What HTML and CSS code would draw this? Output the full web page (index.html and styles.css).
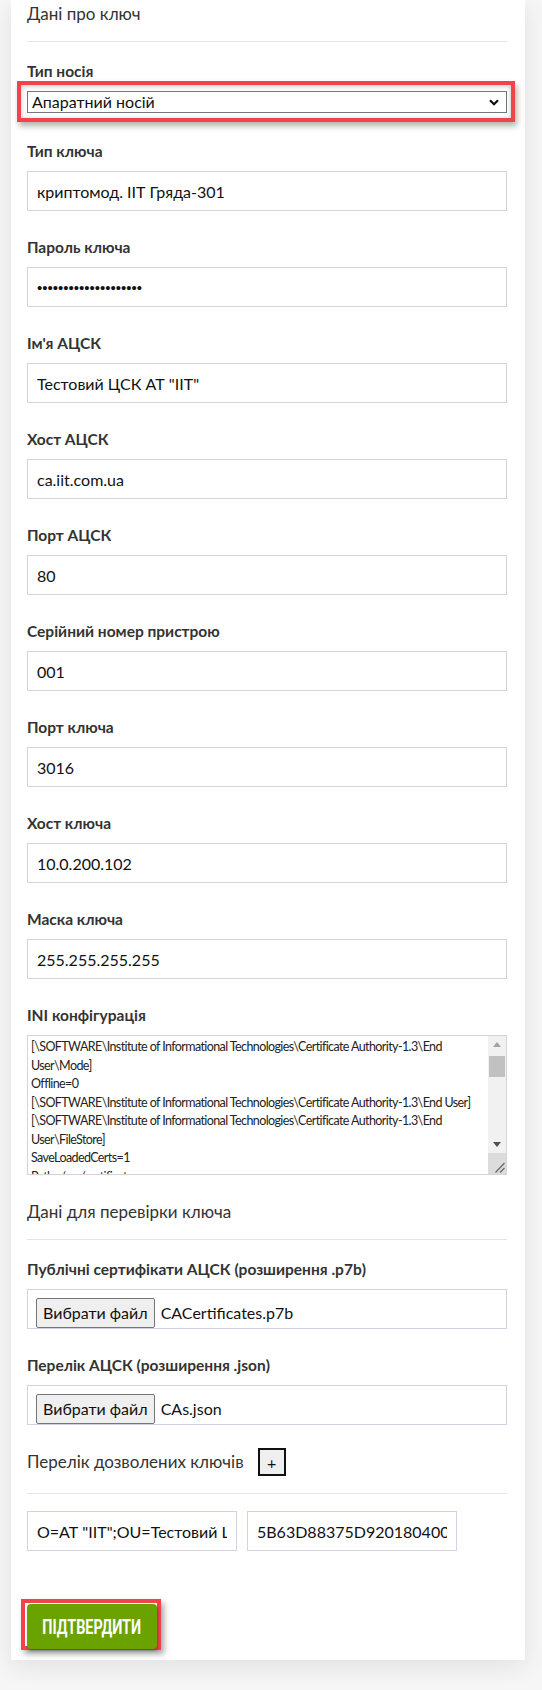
FILE: index.html
```html
<!DOCTYPE html>
<html lang="uk">
<head>
<meta charset="utf-8">
<title>Дані про ключ</title>
<link rel="stylesheet" href="styles.css">
</head>
<body>
<div class="card">
  <h4 class="section-title">Дані про ключ</h4>
  <hr class="divider">

  <div class="group group-select">
    <label class="label">Тип носія</label>
    <div class="highlight">
      <div class="select" role="combobox" aria-expanded="false">
        <span class="select-value">Апаратний носій</span>
        <svg class="select-arrow" width="10" height="7" viewBox="0 0 10 7" aria-hidden="true">
          <polyline points="1,1.2 5,5.2 9,1.2" fill="none" stroke="#111" stroke-width="2.2"/>
        </svg>
      </div>
    </div>
  </div>

  <div class="group">
    <label class="label">Тип ключа</label>
    <input class="input" type="text" value="криптомод. ІІТ Гряда-301">
  </div>
  <div class="group">
    <label class="label">Пароль ключа</label>
    <input class="input input-password" type="password" value="12345678901234567890">
  </div>
  <div class="group">
    <label class="label">Ім'я АЦСК</label>
    <input class="input" type="text" value="Тестовий ЦСК АТ &quot;ІІТ&quot;">
  </div>
  <div class="group">
    <label class="label">Хост АЦСК</label>
    <input class="input" type="text" value="ca.iit.com.ua">
  </div>
  <div class="group">
    <label class="label">Порт АЦСК</label>
    <input class="input" type="text" value="80">
  </div>
  <div class="group">
    <label class="label">Серійний номер пристрою</label>
    <input class="input" type="text" value="001">
  </div>
  <div class="group">
    <label class="label">Порт ключа</label>
    <input class="input" type="text" value="3016">
  </div>
  <div class="group">
    <label class="label">Хост ключа</label>
    <input class="input" type="text" value="10.0.200.102">
  </div>
  <div class="group">
    <label class="label">Маска ключа</label>
    <input class="input" type="text" value="255.255.255.255">
  </div>
  <div class="group group-ini">
    <label class="label">INI конфігурація</label>
    <div class="ta-box">
<textarea class="textarea">[\SOFTWARE\Institute of Informational Technologies\Certificate Authority-1.3\End User\Mode]
Offline=0
[\SOFTWARE\Institute of Informational Technologies\Certificate Authority-1.3\End User]
[\SOFTWARE\Institute of Informational Technologies\Certificate Authority-1.3\End User\FileStore]
SaveLoadedCerts=1
Path=/var/certificates
CheckCRLs=0
AutoDownloadCRLs=0
AutoRefresh=1
OwnCRLsOnly=0
FullAndDeltaCRLs=0
UseLocalStore=0
ExpireTime=3600
[\SOFTWARE\Institute of Informational Technologies\Certificate Authority-1.3\End User\Proxy]
Use=0
Anonymous=1
Address=
Port=3128
User=
Password=
SavePassword=1
[\SOFTWARE\Institute of Informational Technologies\Certificate Authority-1.3\End User\TSP]
GetStamps=0
Address=ca.iit.com.ua
Port=80
[\SOFTWARE\Institute of Informational Technologies\Certificate Authority-1.3\End User\OCSP]
Use=1
BeforeStore=1
Address=ca.iit.com.ua
Port=80</textarea>
      <div class="vscroll" aria-hidden="true">
        <span class="vs-btn vs-up"></span>
        <span class="vs-track"><span class="vs-thumb"></span></span>
        <span class="vs-btn vs-down"></span>
        <span class="vs-resizer">
          <svg width="18" height="21" viewBox="0 0 18 21">
            <line x1="16.5" y1="10" x2="7.5" y2="19.5" stroke="#666" stroke-width="1.2"/>
            <line x1="16.5" y1="15" x2="12" y2="19.5" stroke="#666" stroke-width="1.2"/>
          </svg>
        </span>
      </div>
    </div>
  </div>

  <h4 class="section-title">Дані для перевірки ключа</h4>
  <hr class="divider">

  <div class="group">
    <label class="label">Публічні сертифікати АЦСК (розширення .p7b)</label>
    <div class="file">
      <span class="file-btn">Вибрати файл</span>
      <span class="file-name">CACertificates.p7b</span>
    </div>
  </div>
  <div class="group group-last-file">
    <label class="label">Перелік АЦСК (розширення .json)</label>
    <div class="file">
      <span class="file-btn">Вибрати файл</span>
      <span class="file-name">CAs.json</span>
    </div>
  </div>

  <div class="row-head">
    <h4 class="section-title">Перелік дозволених ключів</h4>
    <button class="plus" type="button">+</button>
  </div>
  <hr class="divider divider-keys">

  <div class="keys">
    <input class="input key-input" type="text" value="O=АТ &quot;ІІТ&quot;;OU=Тестовий ЦСК;CN=Тестовий ЦСК АТ &quot;ІІТ&quot;">
    <input class="input key-input" type="text" value="5B63D88375D92018040000000100000001000000">
  </div>

  <div class="submit-wrap">
    <button class="submit" type="button"><span class="submit-text">ПІДТВЕРДИТИ</span></button>
  </div>
</div>
</body>
</html>
```

FILE: styles.css
```css
html, body {
  margin: 0;
  padding: 0;
}

body {
  background: #f6f6f6;
  font-family: Lato, "Noto Sans", sans-serif;
  color: #333;
}

.card {
  box-sizing: border-box;
  width: 514px;
  margin: 0 0 24px 11px;
  padding: 4px 18px 10px 16px;
  background: #fff;
  box-shadow: 0 6px 24px rgba(0, 0, 0, 0.09);
}

.section-title {
  margin: 0;
  font-size: 17px;
  line-height: 20px;
  font-weight: 400;
  color: #333;
}

.divider {
  height: 0;
  margin: 17px 0 19px;
  border: 0;
  border-top: 1px solid #e4e4e8;
}

.divider-keys {
  margin: 17px 0 17px;
}

.label {
  display: block;
  margin-bottom: 10px;
  font-size: 15.5px;
  line-height: 20px;
  font-weight: 700;
  color: #333;
}

.group {
  margin-bottom: 26px;
}

.group-select {
  margin-bottom: 19px;
}

.group-select .label {
  margin-bottom: 0;
}

.group-ini {
  margin-bottom: 27px;
}

.group-last-file {
  margin-bottom: 23px;
}

.highlight {
  margin: 0 -8px 0 -10px;
  padding: 6px 4px 5px 6px;
  border: 4px solid #f1434a;
  background: #fff;
  box-shadow: 2px 4px 6px rgba(0, 0, 0, 0.3), inset 0 1px 5px rgba(0, 0, 0, 0.25);
}

.select {
  box-sizing: border-box;
  height: 22px;
  padding: 0 7px 0 4px;
  display: flex;
  align-items: center;
  justify-content: space-between;
  border: 1px solid #767676;
  background: #fff;
  font-size: 16px;
  line-height: 20px;
  color: #111;
}

.select-arrow {
  display: block;
}

.input {
  display: block;
  box-sizing: border-box;
  width: 100%;
  height: 40px;
  margin: 0;
  padding: 0 9px;
  border: 1px solid #d2d2e0;
  border-radius: 0;
  background: #fff;
  font: 400 16px Lato, "Noto Sans", sans-serif;
  color: #111;
  outline: none;
}

.input-password {
  font: 400 15px "Liberation Sans", Arial, sans-serif;
}

.ta-box {
  box-sizing: border-box;
  height: 140px;
  display: flex;
  border: 1px solid #d2d2e0;
  background: #fff;
}

.textarea {
  flex: 1;
  min-width: 0;
  margin: 0;
  padding: 2px 3px;
  border: 0;
  resize: none;
  overflow: hidden;
  outline: none;
  font-family: Lato, "Noto Sans", sans-serif;
  font-size: 12.5px;
  letter-spacing: -0.6px;
  line-height: 18.5px;
  color: #222;
}

.vscroll {
  width: 18px;
  display: flex;
  flex-direction: column;
  background: #f1f1f1;
}

.vs-btn {
  height: 17px;
  display: flex;
  align-items: center;
  justify-content: center;
}

.vs-up::before {
  content: "";
  border-left: 4.5px solid transparent;
  border-right: 4.5px solid transparent;
  border-bottom: 5px solid #a3a3a3;
}

.vs-down::before {
  content: "";
  border-left: 4.5px solid transparent;
  border-right: 4.5px solid transparent;
  border-top: 5px solid #505050;
}

.vs-track {
  flex: 1;
  padding-top: 3px;
}

.vs-thumb {
  display: block;
  height: 21px;
  margin: 0 1px;
  background: #c1c1c1;
}

.vs-resizer {
  display: block;
  height: 21px;
  background: #dcdcdc;
}

.vs-resizer svg {
  display: block;
}

.file {
  box-sizing: border-box;
  height: 40px;
  padding: 7px 8px 0;
  border: 1px solid #d2d2e0;
  display: flex;
  align-items: center;
}

.file-btn {
  box-sizing: border-box;
  height: 30px;
  padding: 0 6px;
  display: inline-flex;
  align-items: center;
  border: 1px solid #767676;
  border-radius: 2px;
  background: #efefef;
  font-size: 16px;
  color: #111;
}

.file-name {
  margin-left: 6px;
  font-size: 16px;
  color: #111;
}

.row-head {
  display: flex;
  align-items: center;
  gap: 14px;
}

.plus {
  box-sizing: border-box;
  width: 28px;
  height: 28px;
  padding: 0;
  display: flex;
  align-items: center;
  justify-content: center;
  border: 2px solid #111;
  background: #efefef;
  font: 400 16px Lato, "Noto Sans", sans-serif;
  color: #111;
}

.keys {
  display: flex;
  gap: 10px;
}

.key-input {
  width: 210px;
}

.submit-wrap {
  display: inline-block;
  margin: 48px 0 0 -6px;
  padding: 1px 0 0 2px;
  border: 4px solid #f1434a;
  box-shadow: 3px 4px 6px rgba(0, 0, 0, 0.35);
}

.submit {
  display: flex;
  align-items: center;
  justify-content: center;
  width: 130px;
  height: 45px;
  margin-bottom: -3px;
  padding: 0;
  border: 0;
  border-radius: 4px;
  background: #6aa200;
  box-shadow: 1px 2px 3px rgba(0, 0, 0, 0.3);
}

.submit-text {
  display: inline-block;
  font-family: Roboto, "Liberation Sans", sans-serif;
  font-weight: 700;
  font-size: 20px;
  color: #fff;
  transform: scaleX(0.72);
  white-space: nowrap;
}
```
